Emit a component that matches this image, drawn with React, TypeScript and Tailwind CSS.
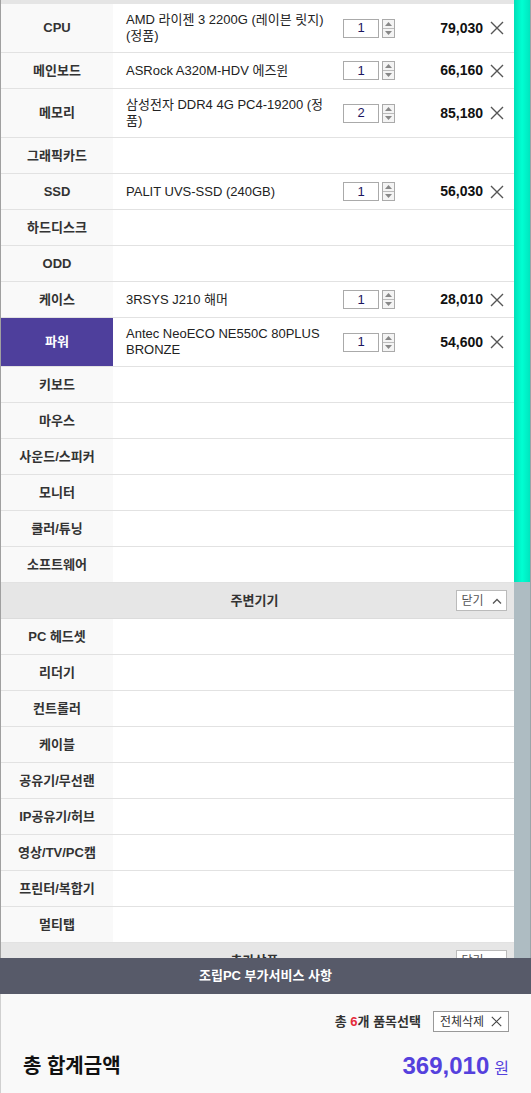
import React from "react";

type Item = { label: string; name?: string; qty?: number; price?: string; tall?: boolean; active?: boolean };

const parts: Item[] = [
  { label: "CPU", name: "AMD 라이젠 3 2200G (레이븐 릿지) (정품)", qty: 1, price: "79,030", tall: true },
  { label: "메인보드", name: "ASRock A320M-HDV 에즈윈", qty: 1, price: "66,160" },
  { label: "메모리", name: "삼성전자 DDR4 4G PC4-19200 (정품)", qty: 2, price: "85,180", tall: true },
  { label: "그래픽카드" },
  { label: "SSD", name: "PALIT UVS-SSD (240GB)", qty: 1, price: "56,030" },
  { label: "하드디스크" },
  { label: "ODD" },
  { label: "케이스", name: "3RSYS J210 해머", qty: 1, price: "28,010" },
  { label: "파워", name: "Antec NeoECO NE550C 80PLUS BRONZE", qty: 1, price: "54,600", tall: true, active: true },
  { label: "키보드" },
  { label: "마우스" },
  { label: "사운드/스피커" },
  { label: "모니터" },
  { label: "쿨러/튜닝" },
  { label: "소프트웨어" },
];

const peripherals: Item[] = [
  { label: "PC 헤드셋" },
  { label: "리더기" },
  { label: "컨트롤러" },
  { label: "케이블" },
  { label: "공유기/무선랜" },
  { label: "IP공유기/허브" },
  { label: "영상/TV/PC캠" },
  { label: "프린터/복합기" },
  { label: "멀티탭" },
];

function XIcon({ size = 14, color = "#555" }: { size?: number; color?: string }) {
  return (
    <svg width={size} height={size} viewBox="0 0 14 14" fill="none">
      <path d="M1 1L13 13M13 1L1 13" stroke={color} strokeWidth="1.4" />
    </svg>
  );
}

function Spinner() {
  return (
    <div className="ml-[3px] flex h-[19px] w-[13px] flex-col border border-[#aaa] bg-[#f4f4f4]">
      <div className="flex flex-1 items-center justify-center border-b border-[#bbb]">
        <svg width="7" height="4" viewBox="0 0 7 4">
          <path d="M0 4L3.5 0L7 4Z" fill="#888" />
        </svg>
      </div>
      <div className="flex flex-1 items-center justify-center">
        <svg width="7" height="4" viewBox="0 0 7 4">
          <path d="M0 0L3.5 4L7 0Z" fill="#888" />
        </svg>
      </div>
    </div>
  );
}

function Row({ item }: { item: Item }) {
  return (
    <div className={`flex border-b border-[#e2e2e2] ${item.tall ? "h-[49px]" : "h-[36px]"}`}>
      <div
        className={`flex w-[112px] shrink-0 items-center justify-center text-[13px] font-bold ${
          item.active ? "bg-[#4e3f9c] text-white" : "bg-[#f9f9f9] text-[#333]"
        }`}
      >
        {item.label}
      </div>
      <div className="flex flex-1 items-center bg-white pl-[13px] pr-[10px]">
        {item.name && (
          <>
            <div className="w-[204px] text-[13px] leading-[16px] text-[#222]">{item.name}</div>
            <div className="ml-[13px] flex h-[19px] w-[36px] items-center justify-center border border-[#aaa] bg-white text-[13px] text-[#1c1660]">
              {item.qty}
            </div>
            <Spinner />
            <div className="flex-1 text-right text-[14px] font-bold text-[#111]">{item.price}</div>
            <div className="ml-[7px] flex w-[14px] items-center">
              <XIcon />
            </div>
          </>
        )}
      </div>
    </div>
  );
}

function SectionHeader({ title }: { title: string }) {
  return (
    <div className="relative flex h-[36px] items-center justify-center border-b border-[#dcdcdc] bg-[#e6e6e6] pr-[6px]">
      <span className="text-[13px] font-bold text-[#333]">{title}</span>
      <div className="absolute right-[7px] top-[7px] flex h-[21px] w-[51px] items-center justify-center gap-[8px] border border-[#bbb] bg-white text-[12px] text-[#555]">
        <span>닫기</span>
        <svg width="10" height="6" viewBox="0 0 10 6" fill="none">
          <path d="M1 5.5L5 1.5L9 5.5" stroke="#555" strokeWidth="1.3" />
        </svg>
      </div>
    </div>
  );
}

export default function App() {
  return (
    <div className="flex h-[1093px] w-[531px] flex-col overflow-hidden bg-white font-['Liberation_Sans','Noto_Sans_CJK_KR',sans-serif]">
      <div className="flex h-[958px] shrink-0 overflow-hidden">
        <div className="flex-1 overflow-hidden border-l border-[#a0a0a0]">
          <div className="h-[4px] bg-[#e5e5e5]" />
          {parts.map((p) => (
            <Row key={p.label} item={p} />
          ))}
          <SectionHeader title="주변기기" />
          {peripherals.map((p) => (
            <Row key={p.label} item={p} />
          ))}
          <SectionHeader title="추가상품" />
        </div>
        <div className="flex w-[17px] shrink-0 flex-col border-r border-[#9aa4a8]">
          <div className="h-[582px] bg-gradient-to-r from-[#00dfb8] via-[#00ffd2] to-[#00e6bf]" />
          <div className="flex-1 bg-[#aebcc2]" />
        </div>
      </div>
      <div className="flex h-[36px] shrink-0 items-center justify-center bg-[#575a69] text-[13px] font-bold text-white">
        조립PC 부가서비스 사항
      </div>
      <div className="flex flex-1 flex-col border-l border-[#d0d0d0] bg-[#f9f9f9] pl-[22px] pr-[22px] pt-[17px]">
        <div className="flex items-center justify-end gap-[12px]">
          <span className="text-[13px] font-bold text-[#333]">
            총 <span className="text-[#e52a3a]">6</span>개 품목선택
          </span>
          <div className="flex h-[21px] w-[76px] items-center justify-center gap-[7px] border border-[#999] bg-white text-[12px] text-[#333]">
            <span>전체삭제</span>
            <XIcon size={11} color="#444" />
          </div>
        </div>
        <div className="mt-[16px] flex items-center justify-between">
          <span className="text-[20px] font-bold text-[#111]">총 합계금액</span>
          <span className="flex items-baseline gap-[5px] text-[#5541dd]">
            <span className="text-[24px] font-bold">369,010</span>
            <span className="text-[16px]">원</span>
          </span>
        </div>
      </div>
    </div>
  );
}
